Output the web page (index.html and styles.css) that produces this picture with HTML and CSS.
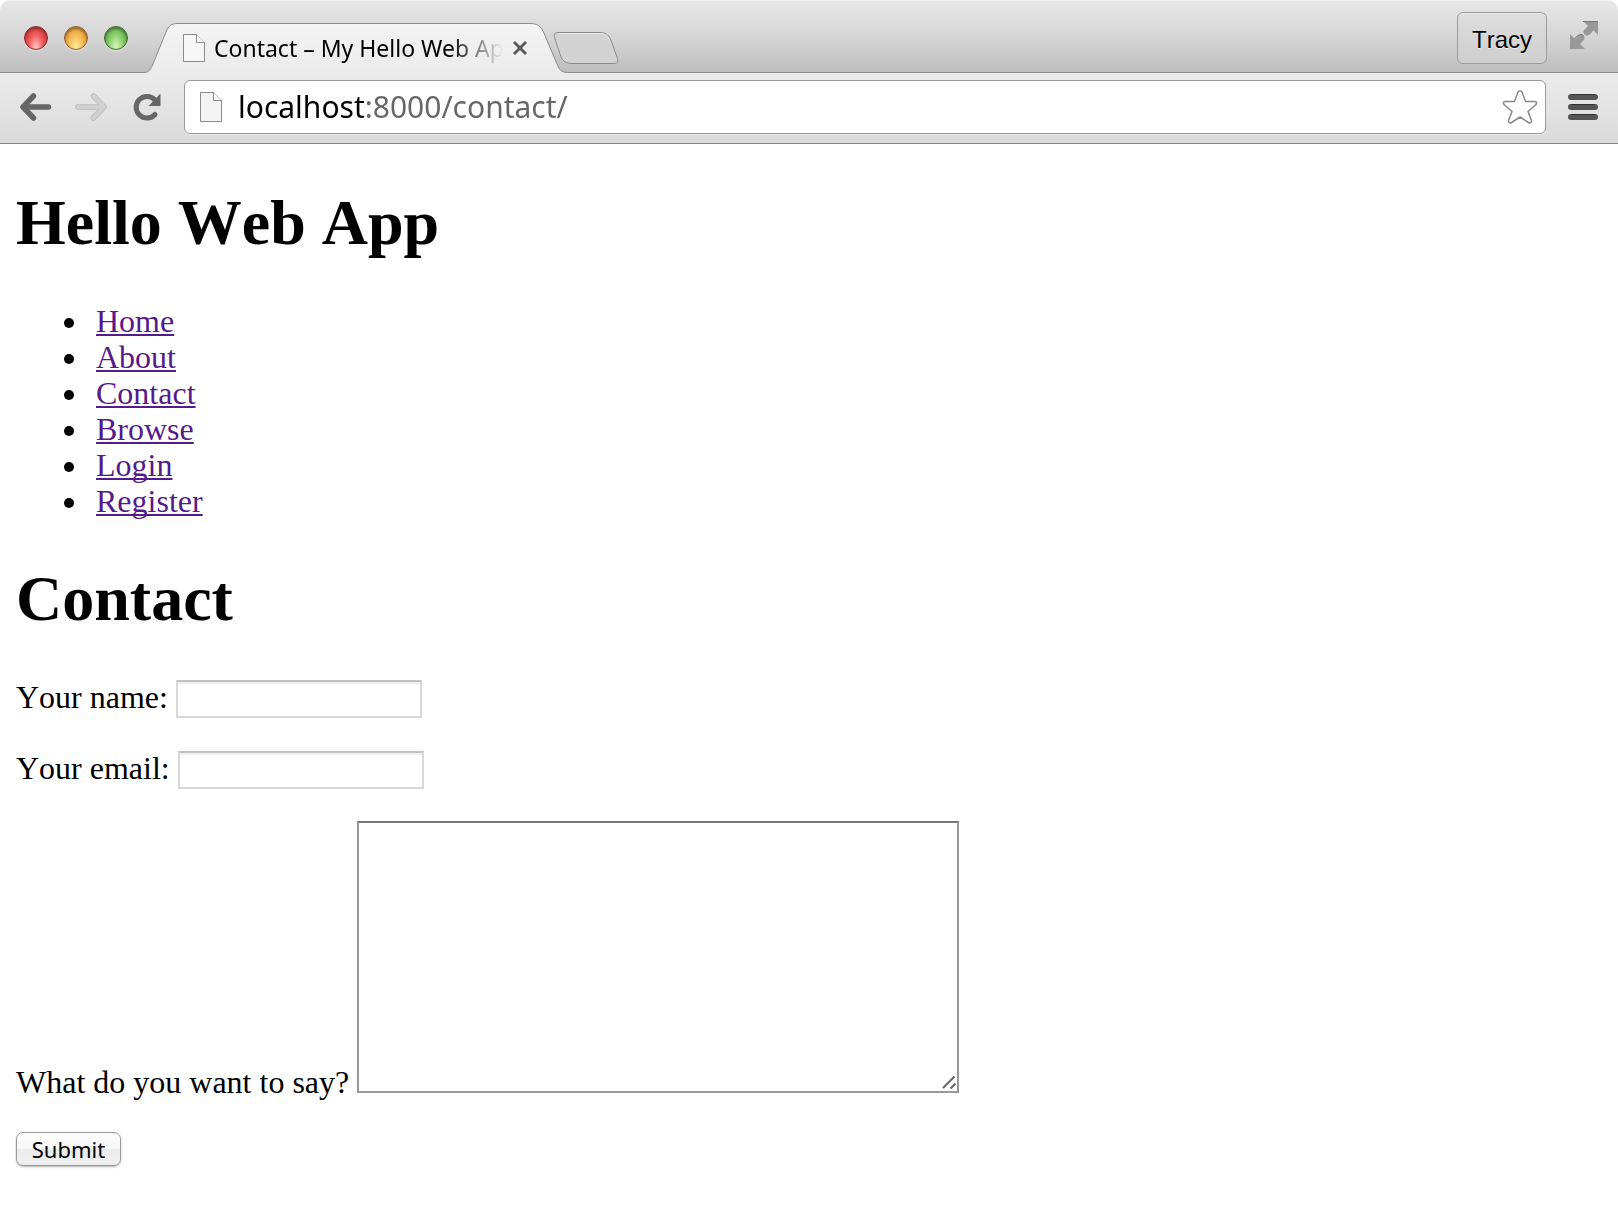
FILE: index.html
```html
<!DOCTYPE html>
<html lang="en">
<head>
<meta charset="utf-8">
<title>Contact – My Hello Web App</title>
<link rel="stylesheet" href="styles.css">
</head>
<body>
<header class="chrome">
  <div class="tabstrip">
    <div class="lights">
      <button class="light red" aria-label="Close"></button>
      <button class="light amber" aria-label="Minimize"></button>
      <button class="light green" aria-label="Zoom"></button>
    </div>
    <div class="tab">
      <svg class="tab-shape" viewBox="0 0 424 50" aria-hidden="true">
        <defs><linearGradient id="tabfill" x1="0" y1="0" x2="0" y2="1"><stop offset="0" stop-color="#f4f4f4"/><stop offset="1" stop-color="#ebebeb"/></linearGradient></defs>
        <path d="M0 50V49.500C5 49.500 7 46 9 41L22 9C24.500 3 27 .5 34 .5H386C393 .5 397 3 399.500 9L413 41C415 46 417 49.500 424 49.500V50Z" fill="url(#tabfill)"/>
        <path d="M0 49.500C5 49.500 7 46 9 41L22 9C24.500 3 27 .5 34 .5H386C393 .5 397 3 399.500 9L413 41C415 46 417 49.500 424 49.500" fill="none" stroke="#8b8b8b"/>
      </svg>
      <svg class="page-icon" width="22" height="28" viewBox="0 0 22 28" aria-hidden="true"><path d="M.5 .5H13.500L21.500 8.500V27.500H.5Z" fill="#f7f7f7" stroke="#8c8c8c"/><path d="M13.500 .5V8.500H21.500" fill="#fff" stroke="#8c8c8c"/></svg>
      <span class="tab-title">Contact – My Hello Web Ap</span>
      <button class="icon-button" aria-label="Close tab"><svg width="16" height="16" viewBox="0 0 16 16"><path d="M2 2L14 14M14 2L2 14" stroke="#5c5c5c" stroke-width="3"/></svg></button>
    </div>
    <button class="icon-button new-tab" aria-label="New tab"><svg width="66" height="34" viewBox="0 0 66 34"><path d="M5 1.500H46C52 1.500 55 3 57.500 8L64 26C65.500 30 65 32.500 61 32.500H19C13 32.500 10 30 8 26L2 8C.5 4 1 1.500 5 1.500Z" fill="#d3d3d3" stroke="#8b8b8b"/><path d="M6 2.500H46C51 2.500 54 4 56 8" fill="none" stroke="#e8e8e8"/></svg></button>
    <div class="window-tools">
      <button class="profile">Tracy</button>
      <button class="icon-button" aria-label="Full screen"><svg width="28" height="28" viewBox="0 0 28 28"><path d="M13 0H28V14L23.500 9.500L20 13Q17 16 14.500 13.500T15 8L18 5Z" fill="#999"/><path d="M0 13L5 18L8 15Q11 12 13.500 14.500T13 20L10 23L15 28H0Z" fill="#999"/><path d="M13 .5H28M4.500 17.500L8 14.500Q11 12 13.500 14.500" fill="none" stroke="#777"/></svg></button>
    </div>
  </div>
  <div class="toolbar">
    <nav class="history" aria-label="History">
      <button class="icon-button" aria-label="Back"><svg width="32" height="28" viewBox="0 0 32 28"><path d="M28.500 14H4M13.500 3L3 14L13.500 25" fill="none" stroke="#666" stroke-width="5.500" stroke-linecap="round" stroke-linejoin="round"/></svg></button>
      <button class="icon-button" aria-label="Forward"><svg width="32" height="28" viewBox="0 0 32 28"><path d="M3 14H28M18.500 3L29 14L18.500 25" fill="none" stroke="#bbb" stroke-width="5.500" stroke-linecap="round" stroke-linejoin="round"/><path d="M3 14H28M18.500 3L29 14L18.500 25" fill="none" stroke="#d0d0d0" stroke-width="4" stroke-linecap="round" stroke-linejoin="round"/></svg></button>
      <button class="icon-button" aria-label="Reload"><svg width="28" height="28" viewBox="0 0 28 28"><path d="M21.500 6.500A10.800 10.800 0 1 0 22 21.500" fill="none" stroke="#666" stroke-width="5" stroke-linecap="round"/><path d="M27.500 .5V13H15.500Z" fill="#666"/></svg></button>
    </nav>
    <div class="omnibox">
      <svg class="page-icon" width="22" height="30" viewBox="0 0 22 30" aria-hidden="true"><path d="M.5 .5H13.500L21.500 8.500V29.500H.5Z" fill="#f4f4f4" stroke="#8c8c8c"/><path d="M13.500 .5V8.500H21.500" fill="#fff" stroke="#8c8c8c"/></svg>
      <input class="address" type="text" aria-label="Address" value="localhost:8000/contact/">
      <button class="icon-button" aria-label="Bookmark this page"><svg width="36" height="36" viewBox="0 0 36 36"><path d="M16 3Q18 .5 20 3L23.500 12.500H33Q36 13.500 33.500 16L26 22.500L29.500 31.500Q29.500 35 26.500 33.500L18 28L9.500 33.500Q6.500 35 6.500 31.500L10 22.500L2.500 16Q0 13.500 3 12.500H12.500Z" fill="#fff" stroke="#888" stroke-width="1.500" stroke-linejoin="round"/></svg></button>
    </div>
    <button class="icon-button" aria-label="Menu"><svg width="30" height="26" viewBox="0 0 30 26"><g fill="#555"><rect width="30" height="6" rx="3"/><rect y="10" width="30" height="6" rx="3"/><rect y="20" width="30" height="6" rx="3"/></g><path d="M3 .5H27M3 10.500H27M3 20.500H27" stroke="#333"/></svg></button>
  </div>
</header>
<main class="page">
  <h1>Hello Web App</h1>
  <ul>
    <li><a href="#home">Home</a></li>
    <li><a href="#about">About</a></li>
    <li><a href="#contact">Contact</a></li>
    <li><a href="#browse">Browse</a></li>
    <li><a href="#login">Login</a></li>
    <li><a href="#register">Register</a></li>
  </ul>
  <h1 id="contact">Contact</h1>
  <form>
    <p><label for="name">Your name:</label> <input class="field" id="name" type="text"></p>
    <p><label for="email">Your email:</label> <input class="field" id="email" type="email"></p>
    <p><label for="message">What do you want to say?</label> <span class="message-box"><textarea class="message" id="message"></textarea><svg class="grip" width="16" height="16" viewBox="0 0 16 16" aria-hidden="true"><path d="M2 14L13.500 2.500M9.500 14.500L14.500 9.500" stroke="#666" stroke-width="2"/></svg></span></p>
    <button class="submit" type="submit">Submit</button>
  </form>
</main>
</body>
</html>
```
FILE: styles.css
```css
* { box-sizing: border-box; }

body {
  margin: 0;
  background: #fff;
  color: #000;
  font: 32px/36px "Liberation Serif", "Times New Roman", serif;
  font-kerning: none;
}

button, input, textarea { font: inherit; margin: 0; }

.icon-button {
  display: block;
  flex: none;
  padding: 0;
  border: 0;
  background: none;
}
.icon-button svg { display: block; }

/* Browser window */
.chrome { border-bottom: 1px solid #858585; }

.tabstrip {
  display: flex;
  align-items: flex-end;
  height: 73px;
  padding: 0 20px 0 24px;
  border-bottom: 1px solid #8b8b8b;
  border-radius: 10px 10px 0 0;
  background: linear-gradient(#e8e8e8, #d6d6d6 50%, #bebebe);
  box-shadow: inset 0 1px #f2f2f2;
}

.lights {
  display: flex;
  gap: 16px;
  align-self: center;
  padding-top: 4px;
}
.light {
  width: 24px;
  height: 24px;
  padding: 0;
  border: 1px solid;
  border-radius: 50%;
  box-shadow: inset 0 2px 3px rgba(0, 0, 0, .4), 0 1px 1px rgba(255, 255, 255, .6);
}
.red { border-color: #8d2b2b; background: radial-gradient(ellipse at 50% 95%, #ffc9c9, #ee5555 50%, #d93838); }
.amber { border-color: #94602a; background: radial-gradient(ellipse at 50% 95%, #fff0a0, #f3b650 50%, #dc8c30); }
.green { border-color: #3c6e30; background: radial-gradient(ellipse at 50% 95%, #dcfabc, #87cb68 50%, #559e42); }

.tab {
  position: relative;
  display: flex;
  align-items: center;
  width: 424px;
  height: 50px;
  margin: 0 0 -1px 16px;
  padding: 0 30px 0 39px;
}
.tab-shape {
  position: absolute;
  inset: 0;
  width: 100%;
  height: 100%;
}
.page-icon { position: relative; flex: none; }
.tab-title {
  position: relative;
  flex: none;
  width: 300px;
  padding-left: 9px;
  overflow: hidden;
  white-space: nowrap;
  font: 23px/32px "Noto Sans", sans-serif;
  -webkit-mask-image: linear-gradient(to right, #000 244px, transparent 298px);
  mask-image: linear-gradient(to right, #000 244px, transparent 298px);
}
.tab .icon-button { position: relative; margin-left: 7px; }
.new-tab { margin-left: -15px; padding-bottom: 7px; z-index: 1; }

.window-tools {
  display: flex;
  align-items: center;
  gap: 23px;
  margin-left: auto;
  padding-bottom: 8px;
}
.window-tools .icon-button { padding-bottom: 6px; }
.profile {
  width: 90px;
  height: 52px;
  padding: 4px 0 0;
  border: 1px solid #9b9b9b;
  border-radius: 6px;
  background: linear-gradient(#dedede, #cecece);
  box-shadow: inset 0 1px rgba(255, 255, 255, .3);
  color: #000;
  font: 24px/28px "Liberation Sans", Arial, sans-serif;
  font-kerning: none;
  text-shadow: 0 1px #eee;
}

.toolbar {
  display: flex;
  align-items: center;
  gap: 22px;
  height: 70px;
  padding: 0 20px 2px;
  background: linear-gradient(#ececec, #dadada);
}
.history { display: flex; gap: 23px; }
.history .icon-button:last-child { margin-left: 3px; margin-right: 1px; }

.omnibox {
  display: flex;
  flex: 1;
  align-items: center;
  height: 54px;
  padding: 0 7px 0 15px;
  border: 1px solid #999;
  border-radius: 6px;
  background: #fff;
  box-shadow: 0 1px #eee;
}
.address {
  flex: 1;
  min-width: 0;
  height: 40px;
  padding: 0 0 0 16px;
  border: 0;
  outline: 0;
  background: linear-gradient(to right, #000 142px, #666 142px);
  -webkit-background-clip: text;
  background-clip: text;
  color: #666;
  -webkit-text-fill-color: transparent;
  font: 30px/40px "Noto Sans", sans-serif;
}

/* Document */
.page { padding: 42px 16px 32px; }
h1 {
  margin: 0 0 43px;
  font-size: 64px;
  line-height: 74px;
}
ul { margin: 0 0 43px; padding-left: 74px; }
li { padding-left: 6px; }
a {
  color: #551a8b;
  text-decoration-thickness: 2px;
  text-underline-offset: 2px;
  text-decoration-skip-ink: none;
}
p { margin: 0 0 32px; }

.field {
  width: 246px;
  height: 38px;
  padding: 2px;
  border: 2px solid #d8d8d8;
  border-top-color: #c2c2c2;
  background: #fff;
  box-shadow: inset 0 2px 1px #eee;
  font: 22px/28px "Noto Sans", sans-serif;
}
.message-box { display: inline-block; position: relative; }
.message {
  width: 602px;
  height: 272px;
  padding: 4px;
  border: 2px solid #999;
  border-top-color: #777;
  background: #fff;
  font: 22px/28px "Liberation Mono", monospace;
  resize: both;
  vertical-align: baseline;
}
.message::-webkit-resizer { background: transparent; }
.grip {
  position: absolute;
  right: 2px;
  bottom: 10px;
  pointer-events: none;
}
.submit {
  display: block;
  width: 105px;
  height: 34px;
  padding: 0;
  border: 1px solid #9a9a9a;
  border-radius: 7px;
  background: linear-gradient(#fff, #f6f6f6 50%, #ebebeb 51%, #f0f0f0);
  box-shadow: 0 1px 2px rgba(0, 0, 0, .3);
  color: #000;
  font: 22px/28px "Noto Sans", sans-serif;
}
```
